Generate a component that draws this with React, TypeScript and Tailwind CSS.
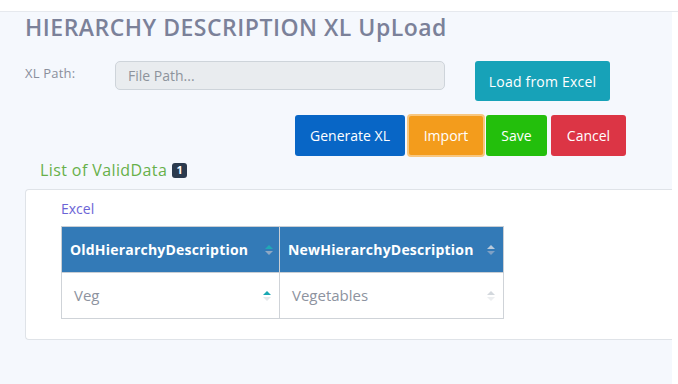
import React from 'react';

const SortIcon: React.FC<{ up?: string; down?: string }> = ({ up = '#b8c4cc', down = '#b8c4cc' }) => (
  <svg width="8" height="12" viewBox="0 0 8 12" className="shrink-0">
    <path d="M0 5 L4 1 L8 5 Z" fill={up} />
    <path d="M0 7 L4 11 L8 7 Z" fill={down} />
  </svg>
);

const App: React.FC = () => {
  return (
    <div
      className="w-[678px] h-[384px] bg-white overflow-hidden"
      style={{ fontFamily: '"Open Sans", "Liberation Sans", sans-serif' }}
    >
      <div className="h-[12px] bg-white border-b border-[#e6e9ee]" />
      <div className="w-[672px] h-[372px] bg-[#f5f8fd] pl-[25px]">
        <h1 className="text-[23px] leading-[28px] pt-[1px] text-[#7b8199] font-semibold tracking-[0.5px]">
          HIERARCHY DESCRIPTION XL UpLoad
        </h1>

        <div className="flex items-start mt-[20px]">
          <label className="w-[90px] text-[13px] text-[#8a8f9c] pt-[3px] tracking-[0.2px]">XL Path:</label>
          <div className="w-[330px] h-[29px] rounded-[5px] bg-[#e9ecef] border border-[#ced4da] flex items-center pl-[12px] text-[14px] text-[#8d939c]">
            File Path...
          </div>
          <button className="ml-[30px] w-[135px] h-[40px] rounded-[3px] bg-[#17a2b8] text-white text-[14px] tracking-[0.2px]">
            Load from Excel
          </button>
        </div>

        <div className="flex items-center mt-[13px] pl-[270px]">
          <button className="w-[110px] h-[41px] rounded-[3px] bg-[#0866c6] text-white text-[14px]">
            Generate XL
          </button>
          <button className="ml-[2px] w-[78px] h-[43px] rounded-[4px] bg-[#f39c1c] text-white text-[14px] border-[2px] border-[#f8c77f]">
            Import
          </button>
          <button className="ml-[1px] w-[61px] h-[41px] rounded-[3px] bg-[#23bf0c] text-white text-[14px]">
            Save
          </button>
          <button className="ml-[4px] w-[75px] h-[41px] rounded-[3px] bg-[#dc3545] text-white text-[14px]">
            Cancel
          </button>
        </div>

        <div className="flex items-center mt-[4px] pl-[15px] h-[18px]">
          <span className="text-[16px] text-[#67b04a] tracking-[0.4px]">List of ValidData</span>
          <span className="ml-[5px] w-[15px] h-[15px] rounded-[3px] bg-[#2b3a4e] text-white text-[11px] font-bold flex items-center justify-center">
            1
          </span>
        </div>

        <div className="mt-[10px] h-[151px] bg-white border border-[#dfe3e8] rounded-l-[4px] border-r-0 pl-[35px] pt-[11px]">
          <div className="text-[14px] text-[#6b64d6] leading-[16px]">Excel</div>
          <table className="mt-[9px] border-collapse">
            <thead>
              <tr className="bg-[#337ab7] text-white h-[46px] text-[14px]">
                <th className="w-[218px] border border-[#c9ced4] text-left pl-[8px] pr-[6px] font-bold tracking-[0.2px]">
                  <div className="flex items-center justify-between">
                    <span>OldHierarchyDescription</span>
                    <SortIcon up="#20a9b6" down="#8fa8c4" />
                  </div>
                </th>
                <th className="w-[224px] border border-[#c9ced4] text-left pl-[8px] pr-[8px] font-bold tracking-[0.2px]">
                  <div className="flex items-center justify-between">
                    <span>NewHierarchyDescription</span>
                    <SortIcon up="#b9c9da" down="#7fa0c4" />
                  </div>
                </th>
              </tr>
            </thead>
            <tbody>
              <tr className="h-[46px] text-[#8d93a0]">
                <td className="border border-[#cfd3d8] pl-[12px] pr-[8px]">
                  <div className="flex items-center justify-between">
                    <span className="text-[15px]">Veg</span>
                    <SortIcon up="#1aa8b3" down="#e4e7ea" />
                  </div>
                </td>
                <td className="border border-[#cfd3d8] pl-[12px] pr-[8px]">
                  <div className="flex items-center justify-between">
                    <span className="text-[15px]">Vegetables</span>
                    <SortIcon up="#d3d8dd" down="#eceef0" />
                  </div>
                </td>
              </tr>
            </tbody>
          </table>
        </div>
      </div>
    </div>
  );
};

export default App;
